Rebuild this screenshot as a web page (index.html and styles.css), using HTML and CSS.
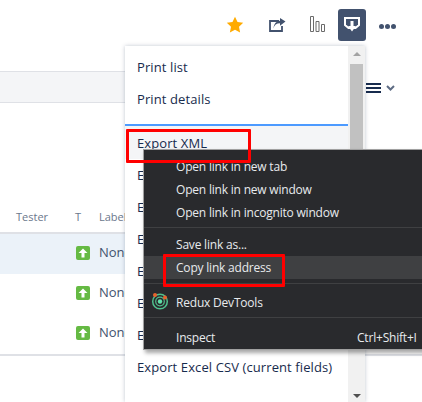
FILE: index.html
```html
<!DOCTYPE html>
<html lang="en">

<head>
    <meta charset="UTF-8">
    <title>Issue list</title>
    <link rel="stylesheet" href="styles.css">
</head>

<body>
    <div class="page">
        <div class="toolbar">
            <svg class="star" width="18" height="18" viewBox="0 0 18 18"><path d="M9 .8l2.5 5.3 5.7.7-4.2 4 1.1 5.800L9 13.800l-5.100 2.800L5 10.800.8 6.800l5.700-.7z" fill="#ffab00"/></svg>
            <svg class="share" width="17" height="14" viewBox="0 0 17 14"><path d="M10 3H1v10h12V8" fill="none" stroke="#42526e" stroke-width="1.800"/><path d="M4.500 10.500c.6-3.600 3-5.300 6.500-5.300V7.800L16.500 3.600 11 0v2.700C7 3 4.800 6 4.500 10.500z" fill="#42526e"/></svg>
            <svg class="bars" width="15" height="16" viewBox="0 0 15 16"><path d="M.5.500h3v15h-3zM6 5.500h3v10H6zM11.500 8.500h3v7h-3z" fill="none" stroke="#6b6b6b"/></svg>
            <div class="export-btn">
                <svg width="16" height="16" viewBox="0 0 16 16"><path d="M1 1h14v7l-3.500 3h-7L1 8z" fill="none" stroke="#fff" stroke-width="2"/><path d="M6.500 4h3v5H12l-4 5.500L4 9h2.500z" fill="#fff"/></svg>
            </div>
            <div class="dots"><span></span><span></span><span></span></div>
        </div>

        <div class="filter-row">
            <div class="band"></div>
            <div class="view-switch">
                <div class="lines"><span></span><span></span><span></span></div>
                <svg width="9" height="6" viewBox="0 0 9 6"><path d="M1 1l3.500 3.500L8 1" fill="none" stroke="#5e6c84" stroke-width="2"/></svg>
            </div>
        </div>

        <div class="issues">
            <div class="issue-row head">
                <div class="col-tester">Tester</div>
                <div class="col-type">T</div>
                <div class="col-label">Labels</div>
            </div>
            <div class="issue-row selected">
                <div class="col-tester"></div>
                <div class="col-type"><span class="type-icon"><svg width="10" height="10" viewBox="0 0 10 10"><path d="M5 .5L9.500 5H6.500v4.500h-3V5H.5z" fill="#fff"/></svg></span></div>
                <div class="col-label">None</div>
            </div>
            <div class="issue-row">
                <div class="col-tester"></div>
                <div class="col-type"><span class="type-icon"><svg width="10" height="10" viewBox="0 0 10 10"><path d="M5 .5L9.500 5H6.500v4.500h-3V5H.5z" fill="#fff"/></svg></span></div>
                <div class="col-label">None</div>
            </div>
            <div class="issue-row">
                <div class="col-tester"></div>
                <div class="col-type"><span class="type-icon"><svg width="10" height="10" viewBox="0 0 10 10"><path d="M5 .5L9.500 5H6.500v4.500h-3V5H.5z" fill="#fff"/></svg></span></div>
                <div class="col-label">None</div>
            </div>
        </div>

        <!-- export dropdown -->
        <div class="export-menu">
            <div class="export-list">
                <div class="export-item">Print list</div>
                <div class="export-item">Print details</div>
                <div class="export-rule"></div>
                <div class="export-item active">Export XML</div>
                <div class="export-item">Export RSS</div>
                <div class="export-item">Export RSS</div>
                <div class="export-item">Export Word</div>
                <div class="export-item">Export HTML</div>
                <div class="export-item">Export HTML</div>
                <div class="export-item">Export Excel</div>
                <div class="export-item">Export Excel CSV (current fields)</div>
            </div>
            <div class="scrollbar">
                <div class="arrow-up"></div>
                <div class="thumb"></div>
                <div class="arrow-down"></div>
            </div>
        </div>

        <!-- browser right click menu -->
        <div class="context-menu">
            <div class="ctx-group open-group">
                <div class="ctx-item">Open link in new tab</div>
                <div class="ctx-item">Open link in new window</div>
                <div class="ctx-item">Open link in incognito window</div>
            </div>
            <div class="ctx-group link-group">
                <div class="ctx-item">Save link as...</div>
                <div class="ctx-item hover">Copy link address</div>
            </div>
            <div class="ctx-group">
                <div class="ctx-item tall">
                    <svg class="redux" width="18" height="18" viewBox="0 0 18 18"><circle cx="9" cy="9.500" r="7.300" fill="none" stroke="#4fc08d" stroke-width="1.500"/><circle cx="9" cy="9.500" r="4.300" fill="none" stroke="#4fc08d" stroke-width="1.200"/><circle cx="9" cy="9.500" r="2.200" fill="#5fe0a8"/><circle cx="4" cy="3" r="2" fill="#e8622c"/><circle cx="14" cy="5.500" r="2" fill="#e8622c"/></svg>
                    Redux DevTools
                </div>
            </div>
            <div class="ctx-group">
                <div class="ctx-item tall last">Inspect<span class="shortcut">Ctrl+Shift+I</span></div>
            </div>
        </div>

        <div class="mark mark-xml"></div>
        <div class="mark mark-copy"></div>
    </div>
</body>

</html>
```

FILE: styles.css
```css
body {
    margin: 0;
    font-family: "Open Sans", "Liberation Sans", sans-serif;
    color: #172b4d;
}

.page {
    position: relative;
    width: 422px;
    height: 402px;
    overflow: hidden;
    background-color: #fff;
}

.toolbar {
    display: flex;
    align-items: center;
    height: 50px;
    padding-left: 226px;
}

.star {
    margin-right: 25px;
}

.share {
    margin-right: 24px;
}

.bars {
    margin-right: 13px;
    margin-top: -3px;
}

.export-btn {
    display: flex;
    align-items: center;
    justify-content: center;
    width: 28px;
    height: 32px;
    background-color: #42526e;
    border-radius: 3px;
}

.dots {
    display: flex;
    gap: 1px;
    margin-left: 13px;
    margin-top: 2px;
}

.dots span {
    width: 5px;
    height: 5px;
    border-radius: 50%;
    background-color: #42526e;
}

.filter-row {
    display: flex;
    align-items: center;
    height: 32px;
    margin-top: 21px;
}

.band {
    width: 340px;
    height: 30px;
    background-color: #f4f5f7;
    border-top: 1px solid #dfe1e6;
    border-bottom: 1px solid #dfe1e6;
}

.view-switch {
    display: flex;
    align-items: center;
    gap: 5px;
    margin-left: 26px;
    margin-top: 1px;
}

.lines {
    display: flex;
    flex-direction: column;
    gap: 2px;
    width: 15px;
}

.lines span {
    height: 2px;
    background-color: #172b4d;
}

.issues {
    margin-top: 99px;
    border-bottom: 2px solid #dfe1e6;
}

.issue-row {
    display: flex;
    align-items: center;
    height: 40px;
    padding-left: 16px;
    padding-bottom: 2px;
    box-sizing: border-box;
    font-size: 13px;
    color: #42526e;
}

.issue-row .col-label {
    margin-top: -2px;
}

.issue-row.head {
    height: 32px;
    align-items: flex-start;
    padding-top: 7px;
    padding-bottom: 0;
    font-size: 11px;
    color: #6b778c;
    border-bottom: 2px solid #dfe1e6;
}

.issue-row.head .col-label {
    margin-top: 0;
}

.issue-row.selected {
    background-color: #ebf2f9;
}

.col-tester {
    width: 59px;
}

.col-type {
    width: 24px;
    display: flex;
}

.type-icon {
    display: flex;
    align-items: center;
    justify-content: center;
    width: 14px;
    height: 14px;
    margin-left: 1px;
    background-color: #65ba43;
    border-radius: 2px;
}

/* dropdown */
.export-menu {
    position: absolute;
    top: 46px;
    left: 125px;
    display: flex;
    width: 240px;
    height: 356px;
    background-color: #fff;
    box-shadow: 0 0 4px rgba(9, 30, 66, 0.25);
}

.export-list {
    flex: 1;
    padding-top: 5px;
}

.export-item {
    height: 32px;
    line-height: 32px;
    padding-left: 12px;
    font-size: 13px;
    letter-spacing: 0.1px;
    white-space: nowrap;
}

.export-item.active {
    padding-top: 1px;
    background-color: #f4f5f7;
}

.export-rule {
    height: 2px;
    margin-top: 9px;
    background-color: #4c9aff;
}

.scrollbar {
    position: relative;
    width: 17px;
    background-color: #f1f1f1;
}

.thumb {
    position: absolute;
    top: 18px;
    left: 2px;
    width: 13px;
    height: 200px;
    background-color: #c1c1c1;
}

.arrow-up,
.arrow-down {
    position: absolute;
    left: 5px;
    width: 0;
    height: 0;
    border-left: 4px solid transparent;
    border-right: 4px solid transparent;
}

.arrow-up {
    top: 6px;
    border-bottom: 4px solid #a3a3a3;
}

.arrow-down {
    bottom: 4px;
    border-top: 4px solid #505050;
}

/* context menu */
.context-menu {
    position: absolute;
    top: 149px;
    left: 143px;
    width: 290px;
    height: 201px;
    padding-top: 5px;
    box-sizing: border-box;
    background-color: #292a2d;
    border: 1px solid #a0a0a0;
    box-shadow: 2px 3px 4px rgba(0, 0, 0, 0.35);
    font-size: 12px;
    letter-spacing: -0.2px;
    color: #e8eaed;
}

.ctx-group {
    border-bottom: 1px solid #3f4042;
}

.ctx-group:last-child {
    border-bottom: 0;
}

.open-group {
    padding-bottom: 3px;
}

.link-group {
    padding-top: 5px;
    padding-bottom: 4px;
}

.ctx-item {
    position: relative;
    height: 23px;
    line-height: 23px;
    padding-left: 32px;
    white-space: nowrap;
}

.ctx-item.tall {
    height: 33px;
    line-height: 37px;
}

.ctx-item.tall.last {
    height: 30px;
    line-height: 40px;
}

.ctx-item.hover {
    background-color: #3f4042;
}

.redux {
    position: absolute;
    top: 8px;
    left: 7px;
}

.shortcut {
    position: absolute;
    left: 213px;
}

/* red marks from the screenshot */
.mark {
    position: absolute;
    box-sizing: border-box;
    border: 3px solid #f00;
    border-radius: 1px;
}

.mark-xml {
    top: 129px;
    left: 126px;
    width: 125px;
    height: 34px;
}

.mark-copy {
    top: 254px;
    left: 163px;
    width: 122px;
    height: 33px;
}
```
